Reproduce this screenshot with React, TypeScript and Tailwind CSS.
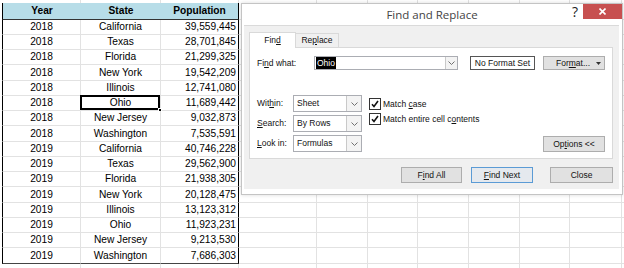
import React from "react";

const states = ["California", "Texas", "Florida", "New York", "Illinois", "Ohio", "New Jersey", "Washington"];
const pop2018 = ["39,559,445", "28,701,845", "21,299,325", "19,542,209", "12,741,080", "11,689,442", "9,032,873", "7,535,591"];
const pop2019 = ["40,746,228", "29,562,900", "21,938,305", "20,128,475", "13,123,312", "11,923,231", "9,213,530", "7,686,303"];

const rows = [
  ...states.map((s, i) => ({ year: "2018", state: s, pop: pop2018[i] })),
  ...states.map((s, i) => ({ year: "2019", state: s, pop: pop2019[i] })),
];

const gridCols = ["w-[78px]", "w-[51px]", "w-[50px]", "w-[51px]", "w-[51px]", "w-[50px]", "w-[52px]"];

const GridRest = ({ bottom = true }: { bottom?: boolean }) => (
  <>
    {gridCols.map((w, i) => (
      <div key={i} className={`${w} shrink-0 border-r border-[#e2e2e2] ${bottom ? "border-b" : ""}`} />
    ))}
    <div className={`flex-1 border-[#e2e2e2] ${bottom ? "border-b" : ""}`} />
  </>
);

const Chevron = () => (
  <svg width="7" height="4" viewBox="0 0 7 4">
    <path d="M0.5 0.5 L3.5 3.5 L6.5 0.5" fill="none" stroke="#707070" strokeWidth="1" />
  </svg>
);

const Select = ({ value }: { value: string }) => (
  <div className="flex h-[17px] w-[69px] border border-[#abadb3] bg-white">
    <div className="flex flex-1 items-center pl-[3px]">{value}</div>
    <div className="flex w-[15px] items-center justify-center border-l border-[#c9c9c9] bg-[#f3f3f3]">
      <Chevron />
    </div>
  </div>
);

const Check = () => (
  <div className="flex h-[12px] w-[12px] items-center justify-center border border-[#333] bg-white">
    <svg width="8" height="8" viewBox="0 0 8 8">
      <path d="M1 4.2 L3 6.5 L7 1" stroke="#111" strokeWidth="1.6" fill="none" />
    </svg>
  </div>
);

const U = ({ children }: { children: React.ReactNode }) => <span className="underline underline-offset-1">{children}</span>;

export default function App() {
  return (
    <div className="relative h-[268px] w-[624px] overflow-hidden bg-white font-['Liberation_Sans',Arial,sans-serif] text-black">
      {/* spreadsheet */}
      <div className="flex flex-col text-[10.2px]">
        <div className="flex h-[3px]">
          <div className="w-[2px] shrink-0" />
          <div className="w-[79px] shrink-0 border-r border-[#e2e2e2]" />
          <div className="w-[80px] shrink-0 border-r border-[#e2e2e2]" />
          <div className="w-[78px] shrink-0 border-r border-[#e2e2e2]" />
          <GridRest bottom={false} />
        </div>
        <div className="flex h-[16.5px] font-bold">
          <div className="w-[2px] shrink-0" />
          <div className="flex w-[79px] shrink-0 items-center justify-center border-b border-l border-b-[#333] border-l-black bg-[#b7dde8]">Year</div>
          <div className="flex w-[80px] shrink-0 items-center justify-center border-b border-b-[#333] bg-[#b7dde8]">State</div>
          <div className="flex w-[78px] shrink-0 items-center justify-center border-r border-b border-b-[#333] border-r-black bg-[#b7dde8]">Population</div>
          <GridRest />
        </div>
        {rows.map((r, i) => {
          const last = i === rows.length - 1;
          return (
            <div key={i} className="flex h-[15.25px]">
              <div className="w-[2px] shrink-0" />
              <div className={`flex w-[79px] shrink-0 items-center justify-center border-l border-r border-b border-l-black border-r-[#e2e2e2] ${last ? "border-b-[#444]" : "border-b-[#e2e2e2]"}`}>
                {r.year}
              </div>
              <div className={`relative flex w-[80px] shrink-0 items-center justify-center border-r border-b border-r-[#e2e2e2] ${last ? "border-b-[#444]" : "border-b-[#e2e2e2]"}`}>
                {r.state}
                {i === 5 && (
                  <>
                    <span className="absolute -left-[1px] -top-[1px] right-0 bottom-0 border-2 border-black" />
                    <span className="absolute -right-[2px] -bottom-[2px] h-[4px] w-[4px] border border-white bg-black" />
                  </>
                )}
              </div>
              <div className={`flex w-[78px] shrink-0 items-center justify-end border-r border-b border-r-black pr-[2px] ${last ? "border-b-[#444]" : "border-b-[#e2e2e2]"}`}>
                {r.pop}
              </div>
              <GridRest />
            </div>
          );
        })}
        <div className="flex h-[15.25px]">
          <div className="w-[2px] shrink-0" />
          <div className="w-[79px] shrink-0 border-r border-b border-[#e2e2e2]" />
          <div className="w-[80px] shrink-0 border-r border-b border-[#e2e2e2]" />
          <div className="w-[78px] shrink-0 border-r border-b border-[#e2e2e2]" />
          <GridRest />
        </div>
      </div>

      {/* Find and Replace dialog */}
      <div className="absolute left-[241px] top-[3px] flex h-[192px] w-[382px] flex-col border border-[#c4c4c4] bg-white text-[8.5px] text-[#111] shadow-[0_0_4px_rgba(0,0,0,0.15)]">
        <div className="relative flex h-[21px] shrink-0 items-center justify-center">
          <span className="font-['Open_Sans',sans-serif] text-[11.5px] text-[#444]">Find and Replace</span>
          <div className="absolute right-0 top-0 flex items-start">
            <span className="mr-[5px] flex h-[15px] items-center font-['Open_Sans',sans-serif] text-[14px] text-[#222]">?</span>
            <div className="flex h-[15px] w-[39px] items-center justify-center bg-[#c75050]">
              <svg width="7" height="7" viewBox="0 0 7 7">
                <path d="M0.5 0.5 L6.5 6.5 M6.5 0.5 L0.5 6.5" stroke="#fff" strokeWidth="1.6" />
              </svg>
            </div>
          </div>
        </div>

        <div className="mb-[5px] ml-[2px] mr-[3px] flex flex-1 flex-col border-t border-[#dadada] bg-[#f0f0f0] pt-[6px]">
          <div className="relative z-10 -mb-[1px] ml-[5px] flex items-end">
            <div className="flex h-[16px] w-[47px] items-center justify-center border border-b-0 border-[#d9d9d9] bg-white">
              Fin<U>d</U>
            </div>
            <div className="flex h-[15px] w-[43px] items-center justify-center border border-l-0 border-[#d9d9d9] bg-[#f0f0f0]">
              Re<U>p</U>lace
            </div>
          </div>

          <div className="ml-[5px] flex h-[112px] w-[364px] flex-col border border-[#d9d9d9] bg-white pl-[7px] pt-[8px]">
            <div className="flex h-[14px] items-center">
              <span className="w-[57px]">Fi<U>n</U>d what:</span>
              <div className="flex h-[14px] w-[144px] border border-[#abadb3] bg-white">
                <div className="flex flex-1 items-center pl-[1px]">
                  <span className="bg-black px-[1px] text-white">Ohio</span>
                </div>
                <div className="flex w-[12px] items-center justify-center border-l border-[#c9c9c9] bg-[#f3f3f3]">
                  <Chevron />
                </div>
              </div>
              <div className="ml-[12px] flex h-[14px] w-[65px] items-center justify-center border border-[#555] bg-white">
                No Format Set
              </div>
              <div className="ml-[8px] flex h-[14px] w-[62px] items-center border border-[#adadad] bg-[#e1e1e1]">
                <span className="flex-1 pl-[6px] text-center">
                  For<U>m</U>at...
                </span>
                <svg className="mr-[3px]" width="5" height="3" viewBox="0 0 5 3">
                  <path d="M0 0 H5 L2.5 3 Z" fill="#333" />
                </svg>
              </div>
            </div>

            <div className="mt-[25px] flex items-start">
              <div className="flex flex-col gap-[3px]">
                <div className="flex h-[17px] items-center">
                  <span className="w-[36px]">Wit<U>h</U>in:</span>
                  <Select value="Sheet" />
                </div>
                <div className="flex h-[17px] items-center">
                  <span className="w-[36px]"><U>S</U>earch:</span>
                  <Select value="By Rows" />
                </div>
                <div className="flex h-[17px] items-center">
                  <span className="w-[36px]"><U>L</U>ook in:</span>
                  <Select value="Formulas" />
                </div>
              </div>
              <div className="ml-[7px] mt-[3px] flex flex-col gap-[3px]">
                <div className="flex h-[12px] items-center gap-[2px]">
                  <Check />
                  <span>Match <U>c</U>ase</span>
                </div>
                <div className="flex h-[12px] items-center gap-[2px]">
                  <Check />
                  <span>Match entire cell c<U>o</U>ntents</span>
                </div>
              </div>
              <div className="flex-1" />
              <div className="mr-[7px] flex h-[16px] w-[62px] items-center justify-center self-end border border-[#adadad] bg-[#e1e1e1]">
                Op<U>t</U>ions &lt;&lt;
              </div>
            </div>
          </div>

          <div className="mt-[8px] flex justify-end pr-[6px]">
            <div className="flex h-[16px] w-[61px] items-center justify-center border border-[#adadad] bg-[#e1e1e1]">
              F<U>i</U>nd All
            </div>
            <div className="ml-[9px] flex h-[16px] w-[62px] items-center justify-center border border-[#5b9bd5] bg-[#e5e9ee]">
              <U>F</U>ind Next
            </div>
            <div className="ml-[17px] flex h-[16px] w-[63px] items-center justify-center border border-[#adadad] bg-[#e1e1e1]">
              Close
            </div>
          </div>
        </div>
      </div>
    </div>
  );
}
